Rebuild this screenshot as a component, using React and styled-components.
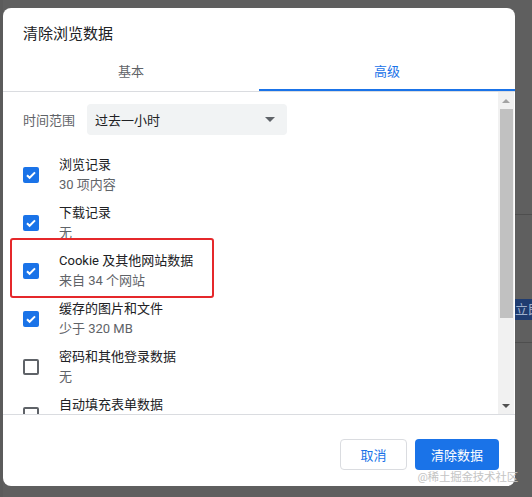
import React from 'react';
import styled, { createGlobalStyle, css } from 'styled-components';

const GlobalStyle = createGlobalStyle`
  html, body {
    margin: 0;
    padding: 0;
    background: #5f5f5f;
  }
  body {
    font-family: Roboto, "Noto Sans CJK SC", sans-serif;
    -webkit-font-smoothing: antialiased;
  }
`;

const Page = styled.div`
  position: relative;
  display: flex;
  width: 532px;
  height: 497px;
  overflow: hidden;
  background: #5f5f5f;
`;

const LeftPeek = styled.div`
  width: 3px;
  flex-shrink: 0;
  background: #5b5b5b;
`;

const RightPeek = styled.div`
  flex: 1;
  display: flex;
  flex-direction: column;
  padding-top: 214px;
  overflow: hidden;
`;

const PeekLine = styled.div`
  height: 1px;
  background: #4e4e4e;
  margin-bottom: 84px;
`;

const PeekButton = styled.div`
  height: 21px;
  background: #1f3c70;
  color: #9fb0cc;
  font-size: 13px;
  line-height: 21px;
  white-space: nowrap;
  margin-bottom: 22px;
`;

const Dialog = styled.div`
  margin-top: 8px;
  width: 512px;
  height: 478px;
  flex-shrink: 0;
  background: #fff;
  border-radius: 8px;
  display: flex;
  flex-direction: column;
  overflow: hidden;
`;

const Title = styled.h2`
  margin: 0;
  padding: 16px 20px 7px;
  font-size: 15px;
  font-weight: 400;
  line-height: 20px;
  color: #202124;
`;

const TabRow = styled.div`
  display: flex;
  border-bottom: 1px solid #dadce0;
`;

const Tab = styled.div`
  flex: 1;
  height: 38px;
  display: flex;
  align-items: center;
  justify-content: center;
  font-size: 13px;
  color: ${({ $active }) => ($active ? '#1a73e8' : '#5f6368')};
  border-bottom: 2px solid ${({ $active }) => ($active ? '#1a73e8' : 'transparent')};
`;

const Body = styled.div`
  height: 322px;
  display: flex;
`;

const Content = styled.div`
  flex: 1;
  overflow: hidden;
  padding-top: 12px;
`;

const RangeRow = styled.div`
  display: flex;
  align-items: center;
  gap: 12px;
  padding: 0 20px;
  margin-bottom: 16px;
`;

const RangeLabel = styled.span`
  font-size: 13px;
  color: #5f6368;
`;

const Select = styled.div`
  width: 200px;
  height: 31px;
  box-sizing: border-box;
  border-radius: 4px;
  background: #f1f3f4;
  display: flex;
  align-items: center;
  justify-content: space-between;
  padding: 0 12px 0 8px;
  font-size: 13px;
  color: #202124;
`;

const Caret = styled.span`
  width: 0;
  height: 0;
  border-left: 5px solid transparent;
  border-right: 5px solid transparent;
  border-top: 5px solid #5f6368;
`;

const Item = styled.div`
  position: relative;
  height: 48px;
  display: flex;
  align-items: center;
  gap: 20px;
  padding: 0 20px;

  ${({ $highlight }) =>
    $highlight &&
    css`
      &::after {
        content: '';
        position: absolute;
        left: 7px;
        top: -9px;
        width: 204px;
        height: 60px;
        box-sizing: border-box;
        border: 2px solid #e5282b;
        border-radius: 3px;
      }
    `}
`;

const Box = styled.span`
  width: 16px;
  height: 16px;
  flex-shrink: 0;
  box-sizing: border-box;
  border-radius: 2px;
  display: flex;
  align-items: center;
  justify-content: center;
  ${({ $checked }) =>
    $checked
      ? css`
          background: #1a73e8;
        `
      : css`
          border: 2px solid #5f6368;
        `}
`;

const Texts = styled.div`
  display: flex;
  flex-direction: column;
`;

const Label = styled.span`
  font-size: 13px;
  line-height: 20px;
  color: #202124;
`;

const Sub = styled.span`
  font-size: 13px;
  line-height: 20px;
  color: #5f6368;
`;

const Scrollbar = styled.div`
  width: 16px;
  margin-right: 1px;
  background: #f1f1f1;
  display: flex;
  flex-direction: column;
  align-items: center;
`;

const Arrow = styled.div`
  height: 17px;
  display: flex;
  align-items: center;
  justify-content: center;
  flex-shrink: 0;
`;

const Thumb = styled.div`
  width: 13px;
  height: 209px;
  background: #c1c1c1;
`;

const Spacer = styled.div`
  flex: 1;
`;

const Footer = styled.div`
  border-top: 1px solid #dadce0;
  display: flex;
  justify-content: flex-end;
  gap: 8px;
  padding: 24px 16px 16px;
`;

const Button = styled.button`
  height: 31px;
  box-sizing: border-box;
  border-radius: 4px;
  font-family: inherit;
  font-size: 13px;
  padding: 0;
  width: ${({ $w }) => $w}px;
  ${({ $primary }) =>
    $primary
      ? css`
          background: #1a73e8;
          border: none;
          color: #fff;
        `
      : css`
          background: #fff;
          border: 1px solid #dadce0;
          color: #1a73e8;
        `}
`;

const Watermark = styled.span`
  position: absolute;
  right: 14px;
  bottom: 13px;
  font-size: 11.5px;
  line-height: 14px;
  color: #c4c4c4;
  white-space: nowrap;
  letter-spacing: -0.2px;
`;

const Check = () => (
  <svg width="12" height="12" viewBox="0 0 12 12">
    <path d="M2 6.2l2.6 2.6L10 3.4" fill="none" stroke="#fff" strokeWidth="2" />
  </svg>
);

const items = [
  { label: '浏览记录', sub: '30 项内容', checked: true },
  { label: '下载记录', sub: '无', checked: true },
  { label: 'Cookie 及其他网站数据', sub: '来自 34 个网站', checked: true, highlight: true },
  { label: '缓存的图片和文件', sub: '少于 320 MB', checked: true },
  { label: '密码和其他登录数据', sub: '无', checked: false },
  { label: '自动填充表单数据', sub: '无', checked: false },
];

export default function App() {
  return (
    <>
      <GlobalStyle />
      <Page>
        <LeftPeek />
        <Dialog>
          <Title>清除浏览数据</Title>
          <TabRow>
            <Tab>基本</Tab>
            <Tab $active>高级</Tab>
          </TabRow>
          <Body>
            <Content>
              <RangeRow>
                <RangeLabel>时间范围</RangeLabel>
                <Select>
                  过去一小时
                  <Caret />
                </Select>
              </RangeRow>
              {items.map((it) => (
                <Item key={it.label} $highlight={it.highlight}>
                  <Box $checked={it.checked}>{it.checked && <Check />}</Box>
                  <Texts>
                    <Label>{it.label}</Label>
                    <Sub>{it.sub}</Sub>
                  </Texts>
                </Item>
              ))}
            </Content>
            <Scrollbar>
              <Arrow>
                <svg width="8" height="4" viewBox="0 0 8 4">
                  <path d="M0 4L4 0L8 4Z" fill="#a3a3a3" />
                </svg>
              </Arrow>
              <Thumb />
              <Spacer />
              <Arrow>
                <svg width="8" height="4" viewBox="0 0 8 4">
                  <path d="M0 0L8 0L4 4Z" fill="#505050" />
                </svg>
              </Arrow>
            </Scrollbar>
          </Body>
          <Footer>
            <Button $w={67}>取消</Button>
            <Button $w={84} $primary>
              清除数据
            </Button>
          </Footer>
        </Dialog>
        <RightPeek>
          <PeekLine />
          <PeekButton>立即</PeekButton>
          <PeekLine />
        </RightPeek>
        <Watermark>@稀土掘金技术社区</Watermark>
      </Page>
    </>
  );
}
